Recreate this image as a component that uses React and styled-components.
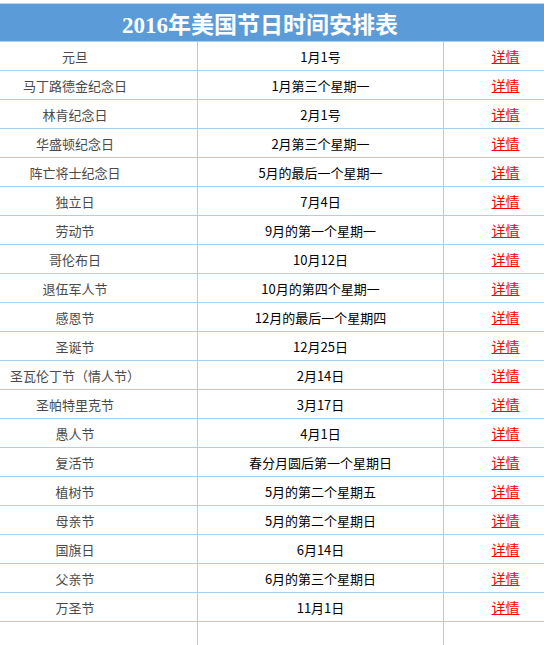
import React from 'react';
import styled, { createGlobalStyle } from 'styled-components';

const GlobalStyle = createGlobalStyle`
  html, body {
    margin: 0;
    padding: 0;
    background: #fff;
    overflow: hidden;
  }
`;

const Page = styled.div`
  width: 544px;
  height: 645px;
  overflow: hidden;
  padding-top: 3px;
  box-sizing: border-box;
`;

// the table is wider than the window, the crop cuts it on both sides
const Table = styled.div`
  width: 614px;
  margin-left: -47px;
`;

const Title = styled.div`
  height: 37px;
  border-top: 1px solid #b4d6f2;
  border-bottom: 1px solid #a4d0f4;
  background: #5b9bd8;
  color: #fff;
  font-family: 'Liberation Serif', 'Noto Sans CJK SC', serif;
  font-weight: bold;
  font-size: 23px;
  display: flex;
  align-items: center;
  justify-content: center;
`;

const Row = styled.div`
  display: grid;
  grid-template-columns: 244px 246px 124px;
  height: ${({ empty }) => (empty ? '40px' : '28px')};
  border-bottom: ${({ empty }) => (empty ? 'none' : '1px solid #a4d0f4')};
`;

const Cell = styled.div`
  display: flex;
  align-items: center;
  justify-content: center;
  font-family: 'Noto Sans CJK SC', 'DejaVu Sans', sans-serif;
  font-size: 13px;
  color: ${({ kind }) => (kind === 'name' ? '#4a4a4a' : '#000')};
  border-left: ${({ kind }) => (kind === 'name' ? 'none' : '1px solid #a4d0f4')};
`;

const Link = styled.a`
  color: #f00;
  text-decoration: underline;
  font-size: 14px;
  cursor: pointer;
`;

const holidays = [
  ['元旦', '1月1号'],
  ['马丁路德金纪念日', '1月第三个星期一'],
  ['林肯纪念日', '2月1号'],
  ['华盛顿纪念日', '2月第三个星期一'],
  ['阵亡将士纪念日', '5月的最后一个星期一'],
  ['独立日', '7月4日'],
  ['劳动节', '9月的第一个星期一'],
  ['哥伦布日', '10月12日'],
  ['退伍军人节', '10月的第四个星期一'],
  ['感恩节', '12月的最后一个星期四'],
  ['圣诞节', '12月25日'],
  ['圣瓦伦丁节（情人节）', '2月14日'],
  ['圣帕特里克节', '3月17日'],
  ['愚人节', '4月1日'],
  ['复活节', '春分月圆后第一个星期日'],
  ['植树节', '5月的第二个星期五'],
  ['母亲节', '5月的第二个星期日'],
  ['国旗日', '6月14日'],
  ['父亲节', '6月的第三个星期日'],
  ['万圣节', '11月1日'],
];

const App = () => {
  return (
    <Page>
      <GlobalStyle />
      <Table>
        <Title>2016年美国节日时间安排表</Title>
        {holidays.map(([name, date]) => (
          <Row key={name}>
            <Cell kind="name">{name}</Cell>
            <Cell kind="date">{date}</Cell>
            <Cell kind="link">
              <Link>详情</Link>
            </Cell>
          </Row>
        ))}
        <Row empty>
          <Cell kind="name" />
          <Cell kind="date" />
          <Cell kind="link" />
        </Row>
      </Table>
    </Page>
  );
};

export default App;
